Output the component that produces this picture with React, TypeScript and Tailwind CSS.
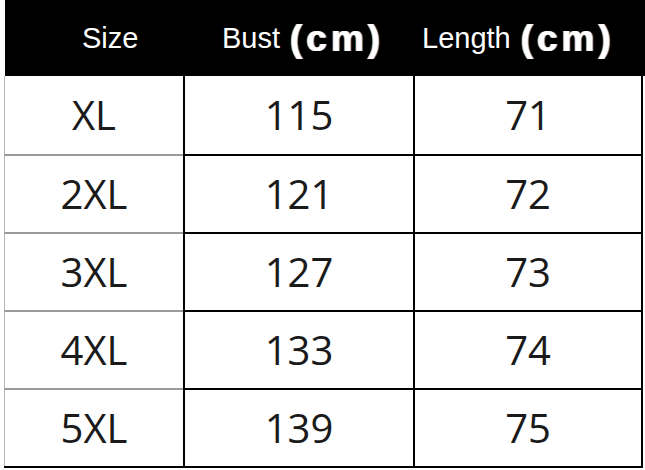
const rows = [
  { size: "XL", bust: "115", length: "71" },
  { size: "2XL", bust: "121", length: "72" },
  { size: "3XL", bust: "127", length: "73" },
  { size: "4XL", bust: "133", length: "74" },
  { size: "5XL", bust: "139", length: "75" },
];

function Unit() {
  return (
    <span className="ml-[10px] font-bold text-[37px] leading-none tracking-[4px] [text-shadow:-1px_0_0_#f0b060,1px_0_0_#6aa0e8]">
      (cm)
    </span>
  );
}

export default function App() {
  return (
    <div className="w-[645px] h-[470px] bg-white overflow-hidden font-['Liberation_Sans',Arial,sans-serif]">
      <div className="ml-[5px] h-[76px] bg-black text-white text-[29px] flex items-center pt-[1px]">
        <div className="w-[217px] pl-[77px]">Size</div>
        <div className="w-[200px] flex items-center">
          Bust
          <Unit />
        </div>
        <div className="flex items-center">
          Length
          <Unit />
        </div>
      </div>

      <div className="ml-[4px] w-[639px] border-b-[2px] border-black font-['Open_Sans',sans-serif] text-[40px] text-[#1a1a1a]">
        {rows.map((r, i) => (
          <div key={r.size} className="flex h-[78px]">
            <div
              className={
                "w-[179px] border-l border-[#b8b8b8] flex items-center justify-center " +
                (i > 0 ? "border-t-[2px] border-t-[#9a9a9a]" : "")
              }
            >
              {r.size}
            </div>
            <div
              className={
                "w-[230px] border-l-[2px] border-black flex items-center justify-center " +
                (i > 0 ? "border-t-[2px]" : "")
              }
            >
              {r.bust}
            </div>
            <div
              className={
                "flex-1 border-l-[2px] border-r-[2px] border-black flex items-center justify-center " +
                (i > 0 ? "border-t-[2px]" : "")
              }
            >
              {r.length}
            </div>
          </div>
        ))}
      </div>
    </div>
  );
}
